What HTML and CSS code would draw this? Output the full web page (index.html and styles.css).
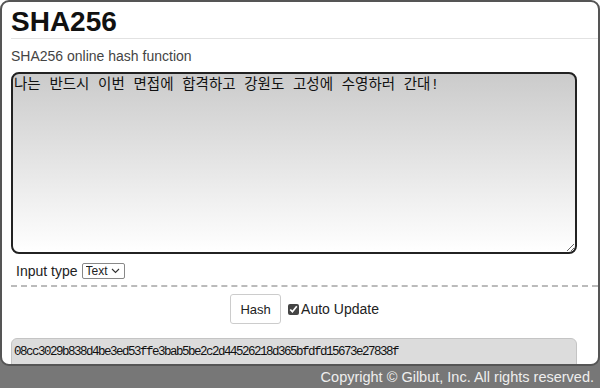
FILE: index.html
```html
<!DOCTYPE html>
<html lang="ko">
<head>
  <meta charset="UTF-8">
  <meta name="viewport" content="width=device-width, initial-scale=1.0">
  <title>SHA256</title>
  <link rel="stylesheet" href="styles.css">
</head>
<body>

  <div class="page">
    <div class="frame">
      <h1 class="title">SHA256</h1>
      <p class="subtitle">SHA256 online hash function</p>

      <!-- Input -->
      <textarea class="input">나는 반드시 이번 면접에 합격하고 강원도 고성에 수영하러 간대!</textarea>

      <div class="options">
        <label for="type">Input type</label>
        <select id="type" class="type-select">
          <option>Text</option>
        </select>
      </div>

      <div class="actions">
        <button class="hash-btn">Hash</button>
        <label class="auto"><input type="checkbox" checked> Auto Update</label>
      </div>

      <!-- Output -->
      <textarea class="output" readonly>08cc3029b838d4be3ed53ffe3bab5be2c2d44526218d365bfdfd15673e27838f</textarea>
    </div>

    <footer class="footer">Copyright © Gilbut, Inc. All rights reserved.</footer>
  </div>

</body>
</html>
```

FILE: styles.css
```css
/* General Styles */
body {
  margin: 0;
  font-family: "Liberation Sans", Arial, sans-serif;
  background-color: #fff;
}

.page {
  width: 600px;
  height: 388px;
  background: linear-gradient(#fff 350px, #777 350px);
}

.frame {
  box-sizing: border-box;
  height: 366px;
  border: 2px solid #555;
  border-radius: 9px;
  background-color: #fff;
  padding: 4px 0 0 9px;
  overflow: hidden;
}

.title {
  margin: 0;
  font-size: 28px;
  line-height: 32px;
  font-weight: bold;
  color: #111;
  padding-bottom: 0;
  border-bottom: 1px solid #e2e2e2;
}

.subtitle {
  margin: 9px 0 7px;
  font-size: 14px;
  line-height: 17px;
  color: #444;
}

/* Text areas */
.input {
  display: block;
  box-sizing: border-box;
  width: 566px;
  height: 182px;
  margin: 0;
  padding: 3px 1px;
  border: 2px solid #222;
  border-radius: 8px;
  background: linear-gradient(#cbcbcb, #fff);
  font-family: "Liberation Mono", "Noto Sans CJK KR", monospace;
  font-size: 14.5px;
  line-height: 17px;
  color: #111;
  outline: none;
}

.options {
  display: flex;
  align-items: center;
  gap: 4px;
  padding: 9px 0 6px 5px;
  font-size: 14px;
  color: #222;
}

.type-select {
  appearance: none;
  -webkit-appearance: none;
  width: 43px;
  height: 16px;
  padding: 0 0 0 3px;
  font-family: "Liberation Sans", Arial, sans-serif;
  font-size: 12px;
  color: #222;
  border: 1px solid #888;
  border-radius: 2px;
  background: #fff url("data:image/svg+xml,%3Csvg xmlns='http://www.w3.org/2000/svg' width='9' height='6' viewBox='0 0 9 6'%3E%3Cpath d='M1 1l3.5 3.5L8 1' fill='none' stroke='%23333' stroke-width='1.1'/%3E%3C/svg%3E") no-repeat right 4px center;
}

.actions {
  display: flex;
  justify-content: center;
  align-items: center;
  gap: 7px;
  border-top: 2px dashed #bbb;
  padding: 7px 0 14px;
}

.hash-btn {
  width: 51px;
  height: 30px;
  font-family: "Liberation Sans", Arial, sans-serif;
  font-size: 13px;
  color: #222;
  background-color: #fff;
  border: 1px solid #ccc;
  border-radius: 3px;
}

.auto {
  display: flex;
  align-items: center;
  gap: 2px;
  font-size: 14px;
  color: #222;
}

.auto input {
  width: 11px;
  height: 11px;
  margin: 0;
  accent-color: #444;
}

.output {
  display: block;
  box-sizing: border-box;
  width: 566px;
  height: 60px;
  margin: 0;
  padding: 6px 2px 4px;
  border: 1px solid #c4c4c4;
  border-radius: 6px;
  background-color: #dcdcdc;
  font-family: "Liberation Mono", monospace;
  font-size: 12.5px;
  letter-spacing: -1.5px;
  color: #111;
  resize: none;
  outline: none;
}

.footer {
  height: 22px;
  line-height: 22px;
  text-align: right;
  padding-right: 6px;
  font-size: 14.5px;
  color: #eee;
}
```
